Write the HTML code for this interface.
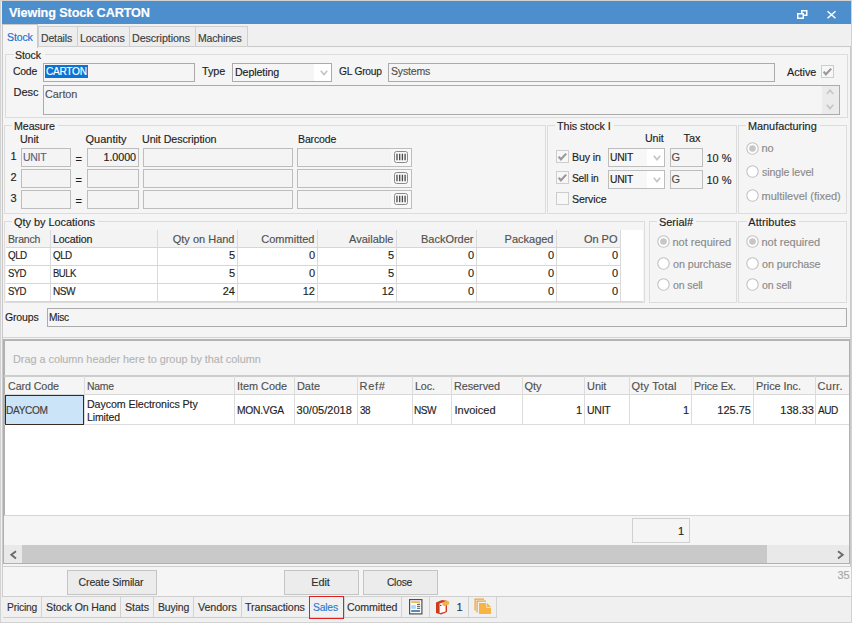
<!DOCTYPE html>
<html><head><meta charset="utf-8"><style>
html,body{margin:0;padding:0;width:852px;height:623px;overflow:hidden;background:#f0f0f0}
.a{position:absolute;box-sizing:border-box}
.t{position:absolute;white-space:nowrap;font-family:"Liberation Sans", sans-serif;-webkit-text-stroke:0.15px currentColor}
</style></head><body>
<div class="a" style="left:0px;top:0px;width:852px;height:623px;background:#d2d2d2;"></div>
<div class="a" style="left:1px;top:1px;width:850px;height:621px;background:#f0f0f0;"></div>
<div class="a" style="left:2px;top:1px;width:849px;height:23px;background:#4d8fcd;"></div>
<div class="t" style="top:6.00px;font-size:13px;line-height:13px;color:#ffffff;font-weight:700;letter-spacing:-0.108px;left:8.5px;transform:scaleX(0.9736);transform-origin:0 0;">Viewing Stock CARTON</div>
<svg class="a" style="left:796px;top:9px" width="13" height="12"><rect x="5.75" y="1.75" width="5" height="4.5" fill="none" stroke="#fff" stroke-width="1.5"/><rect x="1.75" y="4.75" width="5.5" height="4.5" fill="#4d8fcd" stroke="#fff" stroke-width="1.5"/></svg>
<svg class="a" style="left:826px;top:10px" width="11" height="10"><path d="M1.5 1.2 L9.5 8.3 M9.5 1.2 L1.5 8.3" stroke="#fff" stroke-width="1.5"/></svg>
<div class="a" style="left:2px;top:46px;width:849px;height:521px;background:#f5f5f5;border:1px solid #c9c9c9;"></div>
<div class="a" style="left:38px;top:26px;width:40px;height:21px;border:1px solid #cfcfcf;background:#ededed"></div>
<div class="a" style="left:77px;top:26px;width:53px;height:21px;border:1px solid #cfcfcf;background:#ededed"></div>
<div class="a" style="left:129px;top:26px;width:67px;height:21px;border:1px solid #cfcfcf;background:#ededed"></div>
<div class="a" style="left:195px;top:26px;width:53px;height:21px;border:1px solid #cfcfcf;background:#ededed"></div>
<div class="t" style="top:31.69px;font-size:11px;line-height:13px;color:#3c3c3c;letter-spacing:-0.141px;left:40.5px;transform:scaleX(0.952);transform-origin:0 0;">Details</div>
<div class="t" style="top:31.69px;font-size:11px;line-height:13px;color:#3c3c3c;letter-spacing:-0.105px;left:79.5px;transform:scaleX(0.9665);transform-origin:0 0;">Locations</div>
<div class="t" style="top:31.69px;font-size:11px;line-height:13px;color:#3c3c3c;letter-spacing:-0.077px;left:131.5px;transform:scaleX(0.9736);transform-origin:0 0;">Descriptions</div>
<div class="t" style="top:31.69px;font-size:11px;line-height:13px;color:#3c3c3c;letter-spacing:-0.169px;left:197.5px;transform:scaleX(0.9521);transform-origin:0 0;">Machines</div>
<div class="a" style="left:2px;top:24px;width:36px;height:24px;border:1px solid #c9c9c9;border-bottom:none;background:#f5f5f5"></div>
<div class="t" style="top:30.69px;font-size:11px;line-height:13px;color:#1a6fcc;letter-spacing:-0.151px;left:6.5px;transform:scaleX(0.9582);transform-origin:0 0;">Stock</div>
<div class="a" style="left:5px;top:54px;width:843px;height:64px;border:1px solid #dcdcdc;"></div>
<div class="a" style="left:13.5px;top:52px;width:31.0px;height:5px;background:#f5f5f5;"></div>
<div class="t" style="top:48.69px;font-size:11px;line-height:13px;color:#1e1e1e;letter-spacing:-0.134px;left:15.0px;transform:scaleX(0.9632);transform-origin:0 0;">Stock</div>
<div class="t" style="top:64.69px;font-size:11px;line-height:13px;color:#1e1e1e;letter-spacing:-0.245px;left:12.5px;transform:scaleX(0.9466);transform-origin:0 0;">Code</div>
<div class="a" style="left:43px;top:63px;width:152px;height:19px;box-sizing:border-box;border:1px solid #ababab;background:#f5f5f5"></div>
<div class="a" style="left:45px;top:65px;width:43px;height:13px;background:#0a74d6;"></div>
<div class="t" style="top:64.69px;font-size:11px;line-height:13px;color:#ffffff;letter-spacing:-0.354px;left:45.5px;transform:scaleX(0.9259);transform-origin:0 0;">CARTON</div>
<div class="t" style="top:64.69px;font-size:11px;line-height:13px;color:#1e1e1e;letter-spacing:-0.076px;left:201.5px;transform:scaleX(0.9821);transform-origin:0 0;">Type</div>
<div class="a" style="left:232px;top:63px;width:100px;height:19px;box-sizing:border-box;border:1px solid #ababab;background:#f5f5f5"></div>
<div class="a" style="left:314px;top:64px;width:17px;height:17px;background:#ffffff;"></div>
<svg class="a" style="left:318.5px;top:70px" width="10" height="7"><path d="M1.8 0.8 L5 4.6 L8.2 0.8" fill="none" stroke="#c6c6c6" stroke-width="1.7"/></svg>
<div class="t" style="top:66.19px;font-size:11px;line-height:13px;color:#202020;letter-spacing:-0.1px;left:234.5px;transform:scaleX(0.9676);transform-origin:0 0;">Depleting</div>
<div class="t" style="top:64.69px;font-size:11px;line-height:13px;color:#1e1e1e;letter-spacing:-0.244px;left:338.5px;transform:scaleX(0.9311);transform-origin:0 0;">GL Group</div>
<div class="a" style="left:388px;top:63px;width:387px;height:19px;box-sizing:border-box;border:1px solid #ababab;background:#f5f5f5"></div>
<div class="t" style="top:64.69px;font-size:11px;line-height:13px;color:#505050;letter-spacing:-0.167px;left:390.5px;transform:scaleX(0.9546);transform-origin:0 0;">Systems</div>
<div class="t" style="top:65.69px;font-size:11px;line-height:13px;color:#1e1e1e;letter-spacing:-0.045px;left:786.5px;transform:scaleX(0.9857);transform-origin:0 0;">Active</div>
<div class="a" style="left:821px;top:65px;width:13px;height:13px;box-sizing:border-box;border:1px solid #cdcdcd;background:#f7f7f7"></div>
<svg class="a" style="left:821px;top:65px" width="13" height="13"><path d="M2.6 6.6 L4.9 9.3 L10.2 3.6" fill="none" stroke="#999999" stroke-width="2.1"/></svg>
<div class="t" style="top:85.69px;font-size:11px;line-height:13px;color:#1e1e1e;left:13.5px;">Desc</div>
<div class="a" style="left:43px;top:85px;width:797px;height:30px;box-sizing:border-box;border:1px solid #ababab;background:#f5f5f5"></div>
<div class="a" style="left:822px;top:86px;width:17px;height:28px;background:#ebebeb;"></div>
<svg class="a" style="left:825px;top:89px" width="10" height="7"><path d="M1.8 5 L5 1.2 L8.2 5" fill="none" stroke="#c6c6c6" stroke-width="1.7"/></svg>
<svg class="a" style="left:825px;top:104px" width="10" height="7"><path d="M1.8 0.8 L5 4.6 L8.2 0.8" fill="none" stroke="#c6c6c6" stroke-width="1.7"/></svg>
<div class="t" style="top:87.69px;font-size:11px;line-height:13px;color:#505050;letter-spacing:-0.043px;left:44.5px;transform:scaleX(0.9877);transform-origin:0 0;">Carton</div>
<div class="a" style="left:4px;top:125px;width:542px;height:89px;border:1px solid #dcdcdc;"></div>
<div class="a" style="left:12px;top:123px;width:46px;height:5px;background:#f5f5f5;"></div>
<div class="t" style="top:119.69px;font-size:11px;line-height:13px;color:#1e1e1e;letter-spacing:-0.105px;left:13.5px;transform:scaleX(0.9723);transform-origin:0 0;">Measure</div>
<div class="t" style="top:132.69px;font-size:11px;line-height:13px;color:#1e1e1e;letter-spacing:-0.1px;left:19.5px;transform:scaleX(0.9709);transform-origin:0 0;">Unit</div>
<div class="t" style="top:132.69px;font-size:11px;line-height:13px;color:#1e1e1e;letter-spacing:0.019px;left:85.5px;">Quantity</div>
<div class="t" style="top:132.69px;font-size:11px;line-height:13px;color:#1e1e1e;letter-spacing:-0.073px;left:141.5px;transform:scaleX(0.9733);transform-origin:0 0;">Unit Description</div>
<div class="t" style="top:132.69px;font-size:11px;line-height:13px;color:#1e1e1e;letter-spacing:-0.15px;left:297.5px;transform:scaleX(0.9583);transform-origin:0 0;">Barcode</div>
<div class="t" style="top:149.69px;font-size:11px;line-height:13px;color:#1e1e1e;left:10.5px;">1</div>
<div class="a" style="left:21px;top:148px;width:50px;height:19px;box-sizing:border-box;border:1px solid #bdbdbd;background:#f4f4f4"></div>
<div class="t" style="top:153.19px;font-size:11px;line-height:13px;color:#1e1e1e;left:75.5px;">=</div>
<div class="a" style="left:87px;top:148px;width:52px;height:19px;box-sizing:border-box;border:1px solid #bdbdbd;background:#f4f4f4"></div>
<div class="a" style="left:143px;top:148px;width:150px;height:19px;box-sizing:border-box;border:1px solid #bdbdbd;background:#f4f4f4"></div>
<div class="a" style="left:297px;top:148px;width:115px;height:19px;box-sizing:border-box;border:1px solid #bdbdbd;background:#f4f4f4"></div>
<div class="a" style="left:391px;top:149px;width:20px;height:17px;background:#f8f8f8;"></div>
<svg class="a" style="left:394px;top:151px" width="14" height="12"><rect x="0.5" y="0.5" width="13" height="11" rx="2" fill="#f8f8f8" stroke="#8a8a8a"/><path d="M3 2.8 V9.2 M5.7 2.8 V9.2 M8.4 2.8 V9.2 M11.1 2.8 V9.2" stroke="#4a4a4a" stroke-width="1.3"/></svg>
<div class="t" style="top:170.69px;font-size:11px;line-height:13px;color:#1e1e1e;left:10.5px;">2</div>
<div class="a" style="left:21px;top:169px;width:50px;height:19px;box-sizing:border-box;border:1px solid #bdbdbd;background:#f4f4f4"></div>
<div class="t" style="top:174.19px;font-size:11px;line-height:13px;color:#1e1e1e;left:75.5px;">=</div>
<div class="a" style="left:87px;top:169px;width:52px;height:19px;box-sizing:border-box;border:1px solid #bdbdbd;background:#f4f4f4"></div>
<div class="a" style="left:143px;top:169px;width:150px;height:19px;box-sizing:border-box;border:1px solid #bdbdbd;background:#f4f4f4"></div>
<div class="a" style="left:297px;top:169px;width:115px;height:19px;box-sizing:border-box;border:1px solid #bdbdbd;background:#f4f4f4"></div>
<div class="a" style="left:391px;top:170px;width:20px;height:17px;background:#f8f8f8;"></div>
<svg class="a" style="left:394px;top:172px" width="14" height="12"><rect x="0.5" y="0.5" width="13" height="11" rx="2" fill="#f8f8f8" stroke="#8a8a8a"/><path d="M3 2.8 V9.2 M5.7 2.8 V9.2 M8.4 2.8 V9.2 M11.1 2.8 V9.2" stroke="#4a4a4a" stroke-width="1.3"/></svg>
<div class="t" style="top:191.69px;font-size:11px;line-height:13px;color:#1e1e1e;left:10.5px;">3</div>
<div class="a" style="left:21px;top:190px;width:50px;height:19px;box-sizing:border-box;border:1px solid #bdbdbd;background:#f4f4f4"></div>
<div class="t" style="top:195.19px;font-size:11px;line-height:13px;color:#1e1e1e;left:75.5px;">=</div>
<div class="a" style="left:87px;top:190px;width:52px;height:19px;box-sizing:border-box;border:1px solid #bdbdbd;background:#f4f4f4"></div>
<div class="a" style="left:143px;top:190px;width:150px;height:19px;box-sizing:border-box;border:1px solid #bdbdbd;background:#f4f4f4"></div>
<div class="a" style="left:297px;top:190px;width:115px;height:19px;box-sizing:border-box;border:1px solid #bdbdbd;background:#f4f4f4"></div>
<div class="a" style="left:391px;top:191px;width:20px;height:17px;background:#f8f8f8;"></div>
<svg class="a" style="left:394px;top:193px" width="14" height="12"><rect x="0.5" y="0.5" width="13" height="11" rx="2" fill="#f8f8f8" stroke="#8a8a8a"/><path d="M3 2.8 V9.2 M5.7 2.8 V9.2 M8.4 2.8 V9.2 M11.1 2.8 V9.2" stroke="#4a4a4a" stroke-width="1.3"/></svg>
<div class="t" style="top:150.69px;font-size:11px;line-height:13px;color:#60607a;letter-spacing:-0.24px;left:22.5px;transform:scaleX(0.9463);transform-origin:0 0;">UNIT</div>
<div class="t" style="top:150.99px;font-size:11px;line-height:13px;color:#202020;letter-spacing:-0.073px;left:76px;width:60px;text-align:right;transform:scaleX(0.9797);transform-origin:100% 0;">1.0000</div>
<div class="a" style="left:547px;top:125px;width:190px;height:89px;border:1px solid #dcdcdc;"></div>
<div class="a" style="left:555px;top:123px;width:58.700000000000045px;height:5px;background:#f5f5f5;"></div>
<div class="t" style="top:119.69px;font-size:11px;line-height:13px;color:#1e1e1e;letter-spacing:-0.061px;left:556.5px;transform:scaleX(0.9773);transform-origin:0 0;">This stock I</div>
<div class="t" style="top:131.69px;font-size:11px;line-height:13px;color:#1e1e1e;letter-spacing:-0.1px;left:644.5px;transform:scaleX(0.9709);transform-origin:0 0;">Unit</div>
<div class="t" style="top:131.69px;font-size:11px;line-height:13px;color:#1e1e1e;left:683.5px;">Tax</div>
<div class="a" style="left:556px;top:150px;width:13px;height:13px;box-sizing:border-box;border:1px solid #cdcdcd;background:#f7f7f7"></div>
<svg class="a" style="left:556px;top:150px" width="13" height="13"><path d="M2.6 6.6 L4.9 9.3 L10.2 3.6" fill="none" stroke="#999999" stroke-width="2.1"/></svg>
<div class="t" style="top:150.69px;font-size:11px;line-height:13px;color:#1e1e1e;letter-spacing:-0.11px;left:571.5px;transform:scaleX(0.966);transform-origin:0 0;">Buy in</div>
<div class="a" style="left:608px;top:148px;width:57px;height:19px;box-sizing:border-box;border:1px solid #bdbdbd;background:#f7f7f7"></div>
<div class="a" style="left:647px;top:149px;width:17px;height:17px;background:#ffffff;"></div>
<svg class="a" style="left:651.5px;top:155px" width="10" height="7"><path d="M1.8 0.8 L5 4.6 L8.2 0.8" fill="none" stroke="#c6c6c6" stroke-width="1.7"/></svg>
<div class="t" style="top:150.69px;font-size:11px;line-height:13px;color:#202020;letter-spacing:-0.287px;left:609.5px;transform:scaleX(0.9355);transform-origin:0 0;">UNIT</div>
<div class="a" style="left:670px;top:148px;width:33px;height:19px;box-sizing:border-box;border:1px solid #bdbdbd;background:#f5f5f5"></div>
<div class="t" style="top:150.69px;font-size:11px;line-height:13px;color:#505050;left:671.5px;">G</div>
<div class="t" style="top:151.69px;font-size:11px;line-height:13px;color:#1e1e1e;letter-spacing:-0.008px;left:706.5px;">10 %</div>
<div class="a" style="left:556px;top:171px;width:13px;height:13px;box-sizing:border-box;border:1px solid #cdcdcd;background:#f7f7f7"></div>
<svg class="a" style="left:556px;top:171px" width="13" height="13"><path d="M2.6 6.6 L4.9 9.3 L10.2 3.6" fill="none" stroke="#999999" stroke-width="2.1"/></svg>
<div class="t" style="top:171.69px;font-size:11px;line-height:13px;color:#1e1e1e;letter-spacing:-0.19px;left:571.5px;transform:scaleX(0.9264);transform-origin:0 0;">Sell in</div>
<div class="a" style="left:608px;top:170px;width:57px;height:19px;box-sizing:border-box;border:1px solid #bdbdbd;background:#f7f7f7"></div>
<div class="a" style="left:647px;top:171px;width:17px;height:17px;background:#ffffff;"></div>
<svg class="a" style="left:651.5px;top:177px" width="10" height="7"><path d="M1.8 0.8 L5 4.6 L8.2 0.8" fill="none" stroke="#c6c6c6" stroke-width="1.7"/></svg>
<div class="t" style="top:172.69px;font-size:11px;line-height:13px;color:#202020;letter-spacing:-0.287px;left:609.5px;transform:scaleX(0.9355);transform-origin:0 0;">UNIT</div>
<div class="a" style="left:670px;top:170px;width:33px;height:19px;box-sizing:border-box;border:1px solid #bdbdbd;background:#f5f5f5"></div>
<div class="t" style="top:172.69px;font-size:11px;line-height:13px;color:#505050;left:671.5px;">G</div>
<div class="t" style="top:173.69px;font-size:11px;line-height:13px;color:#1e1e1e;letter-spacing:-0.008px;left:706.5px;">10 %</div>
<div class="a" style="left:556px;top:192px;width:13px;height:13px;box-sizing:border-box;border:1px solid #cdcdcd;background:#f7f7f7"></div>
<div class="t" style="top:192.69px;font-size:11px;line-height:13px;color:#1e1e1e;letter-spacing:-0.121px;left:571.5px;transform:scaleX(0.9623);transform-origin:0 0;">Service</div>
<div class="a" style="left:738px;top:125px;width:109px;height:89px;border:1px solid #dcdcdc;"></div>
<div class="a" style="left:746px;top:123px;width:73.70000000000005px;height:5px;background:#f5f5f5;"></div>
<div class="t" style="top:119.69px;font-size:11px;line-height:13px;color:#1e1e1e;letter-spacing:-0.029px;left:747.5px;transform:scaleX(0.9905);transform-origin:0 0;">Manufacturing</div>
<svg class="a" style="left:746px;top:142px" width="13" height="13"><circle cx="6.5" cy="6.5" r="5.7" fill="#ffffff" stroke="#c2c2c2" stroke-width="1.1"/><circle cx="6.5" cy="6.5" r="3.3" fill="#c6c6c6"/></svg>
<div class="t" style="top:141.69px;font-size:11px;line-height:13px;color:#8a8a8a;left:761.5px;">no</div>
<svg class="a" style="left:746px;top:165px" width="13" height="13"><circle cx="6.5" cy="6.5" r="5.7" fill="#ffffff" stroke="#c2c2c2" stroke-width="1.1"/></svg>
<div class="t" style="top:165.69px;font-size:11px;line-height:13px;color:#8a8a8a;letter-spacing:-0.09px;left:761.5px;transform:scaleX(0.9657);transform-origin:0 0;">single level</div>
<svg class="a" style="left:746px;top:189px" width="13" height="13"><circle cx="6.5" cy="6.5" r="5.7" fill="#ffffff" stroke="#c2c2c2" stroke-width="1.1"/></svg>
<div class="t" style="top:189.69px;font-size:11px;line-height:13px;color:#8a8a8a;letter-spacing:-0.012px;left:761.5px;">multilevel (fixed)</div>
<div class="a" style="left:4px;top:221px;width:641px;height:82px;border:1px solid #dcdcdc;"></div>
<div class="a" style="left:12.4px;top:219px;width:86.0px;height:5px;background:#f5f5f5;"></div>
<div class="t" style="top:215.69px;font-size:11px;line-height:13px;color:#1e1e1e;letter-spacing:-0.022px;left:13.9px;transform:scaleX(0.9926);transform-origin:0 0;">Qty by Locations</div>
<div class="a" style="left:6px;top:230px;width:637px;height:72px;background:#ffffff;"></div>
<div class="a" style="left:6px;top:230px;width:614px;height:17px;background:#f3f3f3;"></div>
<div class="a" style="left:50px;top:230px;width:1px;height:71px;background:#dadada;"></div>
<div class="a" style="left:157px;top:230px;width:1px;height:71px;background:#dadada;"></div>
<div class="a" style="left:237px;top:230px;width:1px;height:71px;background:#dadada;"></div>
<div class="a" style="left:317px;top:230px;width:1px;height:71px;background:#dadada;"></div>
<div class="a" style="left:396px;top:230px;width:1px;height:71px;background:#dadada;"></div>
<div class="a" style="left:476px;top:230px;width:1px;height:71px;background:#dadada;"></div>
<div class="a" style="left:556px;top:230px;width:1px;height:71px;background:#dadada;"></div>
<div class="a" style="left:620px;top:230px;width:1px;height:71px;background:#dadada;"></div>
<div class="a" style="left:6px;top:247px;width:614px;height:1px;background:#d6d6d6;"></div>
<div class="a" style="left:6px;top:265px;width:614px;height:1px;background:#d6d6d6;"></div>
<div class="a" style="left:6px;top:283px;width:614px;height:1px;background:#d6d6d6;"></div>
<div class="a" style="left:6px;top:301px;width:637px;height:1px;background:#d6d6d6;"></div>
<div class="t" style="top:232.69px;font-size:11px;line-height:13px;color:#505050;letter-spacing:-0.171px;left:7.5px;transform:scaleX(0.9531);transform-origin:0 0;">Branch</div>
<div class="t" style="top:232.69px;font-size:11px;line-height:13px;color:#1e1e1e;letter-spacing:-0.109px;left:52.5px;transform:scaleX(0.965);transform-origin:0 0;">Location</div>
<div class="t" style="top:232.69px;font-size:11px;line-height:13px;color:#505050;left:154.5px;width:80px;text-align:right;">Qty on Hand</div>
<div class="t" style="top:232.69px;font-size:11px;line-height:13px;color:#505050;left:234.5px;width:80px;text-align:right;">Committed</div>
<div class="t" style="top:232.69px;font-size:11px;line-height:13px;color:#505050;left:313.5px;width:80px;text-align:right;">Available</div>
<div class="t" style="top:232.69px;font-size:11px;line-height:13px;color:#505050;left:393.5px;width:80px;text-align:right;">BackOrder</div>
<div class="t" style="top:232.69px;font-size:11px;line-height:13px;color:#505050;left:473.5px;width:80px;text-align:right;">Packaged</div>
<div class="t" style="top:232.69px;font-size:11px;line-height:13px;color:#505050;left:537.5px;width:80px;text-align:right;">On PO</div>
<div class="t" style="top:248.69px;font-size:11px;line-height:13px;color:#1e1e1e;letter-spacing:-0.598px;left:7.5px;transform:scaleX(0.8962);transform-origin:0 0;">QLD</div>
<div class="t" style="top:248.69px;font-size:11px;line-height:13px;color:#1e1e1e;letter-spacing:-0.598px;left:52.5px;transform:scaleX(0.8962);transform-origin:0 0;">QLD</div>
<div class="t" style="top:248.69px;font-size:11px;line-height:13px;color:#1e1e1e;left:175px;width:60px;text-align:right;">5</div>
<div class="t" style="top:248.69px;font-size:11px;line-height:13px;color:#1e1e1e;left:255px;width:60px;text-align:right;">0</div>
<div class="t" style="top:248.69px;font-size:11px;line-height:13px;color:#1e1e1e;left:334px;width:60px;text-align:right;">5</div>
<div class="t" style="top:248.69px;font-size:11px;line-height:13px;color:#1e1e1e;left:414px;width:60px;text-align:right;">0</div>
<div class="t" style="top:248.69px;font-size:11px;line-height:13px;color:#1e1e1e;left:494px;width:60px;text-align:right;">0</div>
<div class="t" style="top:248.69px;font-size:11px;line-height:13px;color:#1e1e1e;left:558px;width:60px;text-align:right;">0</div>
<div class="t" style="top:266.69px;font-size:11px;line-height:13px;color:#1e1e1e;letter-spacing:-0.756px;left:7.5px;transform:scaleX(0.867);transform-origin:0 0;">SYD</div>
<div class="t" style="top:266.69px;font-size:11px;line-height:13px;color:#1e1e1e;letter-spacing:-0.635px;left:52.5px;transform:scaleX(0.8683);transform-origin:0 0;">BULK</div>
<div class="t" style="top:266.69px;font-size:11px;line-height:13px;color:#1e1e1e;left:175px;width:60px;text-align:right;">5</div>
<div class="t" style="top:266.69px;font-size:11px;line-height:13px;color:#1e1e1e;left:255px;width:60px;text-align:right;">0</div>
<div class="t" style="top:266.69px;font-size:11px;line-height:13px;color:#1e1e1e;left:334px;width:60px;text-align:right;">5</div>
<div class="t" style="top:266.69px;font-size:11px;line-height:13px;color:#1e1e1e;left:414px;width:60px;text-align:right;">0</div>
<div class="t" style="top:266.69px;font-size:11px;line-height:13px;color:#1e1e1e;left:494px;width:60px;text-align:right;">0</div>
<div class="t" style="top:266.69px;font-size:11px;line-height:13px;color:#1e1e1e;left:558px;width:60px;text-align:right;">0</div>
<div class="t" style="top:284.69px;font-size:11px;line-height:13px;color:#1e1e1e;letter-spacing:-0.756px;left:7.5px;transform:scaleX(0.867);transform-origin:0 0;">SYD</div>
<div class="t" style="top:284.69px;font-size:11px;line-height:13px;color:#1e1e1e;letter-spacing:-0.553px;left:52.5px;transform:scaleX(0.9163);transform-origin:0 0;">NSW</div>
<div class="t" style="top:284.69px;font-size:11px;line-height:13px;color:#1e1e1e;left:175px;width:60px;text-align:right;">24</div>
<div class="t" style="top:284.69px;font-size:11px;line-height:13px;color:#1e1e1e;left:255px;width:60px;text-align:right;">12</div>
<div class="t" style="top:284.69px;font-size:11px;line-height:13px;color:#1e1e1e;left:334px;width:60px;text-align:right;">12</div>
<div class="t" style="top:284.69px;font-size:11px;line-height:13px;color:#1e1e1e;left:414px;width:60px;text-align:right;">0</div>
<div class="t" style="top:284.69px;font-size:11px;line-height:13px;color:#1e1e1e;left:494px;width:60px;text-align:right;">0</div>
<div class="t" style="top:284.69px;font-size:11px;line-height:13px;color:#1e1e1e;left:558px;width:60px;text-align:right;">0</div>
<div class="a" style="left:649px;top:221px;width:88px;height:82px;border:1px solid #dcdcdc;"></div>
<div class="a" style="left:657.4px;top:219px;width:39.0px;height:5px;background:#f5f5f5;"></div>
<div class="t" style="top:215.69px;font-size:11px;line-height:13px;color:#1e1e1e;letter-spacing:-0.014px;left:658.9px;">Serial#</div>
<div class="a" style="left:738px;top:221px;width:109px;height:82px;border:1px solid #dcdcdc;"></div>
<div class="a" style="left:746.7px;top:219px;width:52.60000000000002px;height:5px;background:#f5f5f5;"></div>
<div class="t" style="top:215.69px;font-size:11px;line-height:13px;color:#1e1e1e;letter-spacing:0.126px;left:748.2px;">Attributes</div>
<svg class="a" style="left:657px;top:235px" width="13" height="13"><circle cx="6.5" cy="6.5" r="5.7" fill="#ffffff" stroke="#c2c2c2" stroke-width="1.1"/><circle cx="6.5" cy="6.5" r="3.3" fill="#c6c6c6"/></svg>
<div class="t" style="top:235.69px;font-size:11px;line-height:13px;color:#8a8a8a;letter-spacing:-0.007px;left:672.5px;">not required</div>
<svg class="a" style="left:657px;top:257px" width="13" height="13"><circle cx="6.5" cy="6.5" r="5.7" fill="#ffffff" stroke="#c2c2c2" stroke-width="1.1"/></svg>
<div class="t" style="top:257.69px;font-size:11px;line-height:13px;color:#8a8a8a;letter-spacing:-0.071px;left:672.5px;transform:scaleX(0.9778);transform-origin:0 0;">on purchase</div>
<svg class="a" style="left:657px;top:278px" width="13" height="13"><circle cx="6.5" cy="6.5" r="5.7" fill="#ffffff" stroke="#c2c2c2" stroke-width="1.1"/></svg>
<div class="t" style="top:278.69px;font-size:11px;line-height:13px;color:#8a8a8a;letter-spacing:-0.123px;left:672.5px;transform:scaleX(0.9562);transform-origin:0 0;">on sell</div>
<svg class="a" style="left:746px;top:235px" width="13" height="13"><circle cx="6.5" cy="6.5" r="5.7" fill="#ffffff" stroke="#c2c2c2" stroke-width="1.1"/><circle cx="6.5" cy="6.5" r="3.3" fill="#c6c6c6"/></svg>
<div class="t" style="top:235.69px;font-size:11px;line-height:13px;color:#8a8a8a;letter-spacing:-0.007px;left:761.5px;">not required</div>
<svg class="a" style="left:746px;top:257px" width="13" height="13"><circle cx="6.5" cy="6.5" r="5.7" fill="#ffffff" stroke="#c2c2c2" stroke-width="1.1"/></svg>
<div class="t" style="top:257.69px;font-size:11px;line-height:13px;color:#8a8a8a;letter-spacing:-0.071px;left:761.5px;transform:scaleX(0.9778);transform-origin:0 0;">on purchase</div>
<svg class="a" style="left:746px;top:278px" width="13" height="13"><circle cx="6.5" cy="6.5" r="5.7" fill="#ffffff" stroke="#c2c2c2" stroke-width="1.1"/></svg>
<div class="t" style="top:278.69px;font-size:11px;line-height:13px;color:#8a8a8a;letter-spacing:-0.123px;left:761.5px;transform:scaleX(0.9562);transform-origin:0 0;">on sell</div>
<div class="t" style="top:310.69px;font-size:11px;line-height:13px;color:#1e1e1e;letter-spacing:-0.166px;left:4.5px;transform:scaleX(0.9563);transform-origin:0 0;">Groups</div>
<div class="a" style="left:47px;top:308px;width:800px;height:19px;box-sizing:border-box;border:1px solid #ababab;background:#f5f5f5"></div>
<div class="t" style="top:310.69px;font-size:11px;line-height:13px;color:#1e1e1e;letter-spacing:-0.305px;left:48.5px;transform:scaleX(0.9219);transform-origin:0 0;">Misc</div>
<div class="a" style="left:3px;top:337px;width:847px;height:1px;background:#d4d4d4;"></div>
<div class="a" style="left:3px;top:339px;width:847px;height:225px;border:1px solid #b0b0b0;border-top:2px solid #b4b4b4;border-left:2px solid #b0b0b0;background:#ffffff"></div>
<div class="a" style="left:4.5px;top:341px;width:844.5px;height:34px;background:#f4f4f4;"></div>
<div class="t" style="top:352.69px;font-size:11px;line-height:13px;color:#b4b4b4;letter-spacing:-0.03px;left:12.5px;transform:scaleX(0.9893);transform-origin:0 0;">Drag a column header here to group by that column</div>
<div class="a" style="left:4px;top:375px;width:845px;height:2px;background:#cdcdcd;"></div>
<div class="a" style="left:4.5px;top:377px;width:844.5px;height:17px;background:#f5f5f5;"></div>
<div class="a" style="left:4px;top:394px;width:845px;height:1px;background:#d8d8d8;"></div>
<div class="a" style="left:84px;top:376px;width:1px;height:49px;background:#dcdcdc;"></div>
<div class="a" style="left:234px;top:376px;width:1px;height:49px;background:#dcdcdc;"></div>
<div class="a" style="left:294px;top:376px;width:1px;height:49px;background:#dcdcdc;"></div>
<div class="a" style="left:357px;top:376px;width:1px;height:49px;background:#dcdcdc;"></div>
<div class="a" style="left:412px;top:376px;width:1px;height:49px;background:#dcdcdc;"></div>
<div class="a" style="left:451px;top:376px;width:1px;height:49px;background:#dcdcdc;"></div>
<div class="a" style="left:522px;top:376px;width:1px;height:49px;background:#dcdcdc;"></div>
<div class="a" style="left:584px;top:376px;width:1px;height:49px;background:#dcdcdc;"></div>
<div class="a" style="left:629px;top:376px;width:1px;height:49px;background:#dcdcdc;"></div>
<div class="a" style="left:691px;top:376px;width:1px;height:49px;background:#dcdcdc;"></div>
<div class="a" style="left:753px;top:376px;width:1px;height:49px;background:#dcdcdc;"></div>
<div class="a" style="left:815px;top:376px;width:1px;height:49px;background:#dcdcdc;"></div>
<div class="a" style="left:4px;top:424px;width:845px;height:1px;background:#dcdcdc;"></div>
<div class="t" style="top:379.69px;font-size:11px;line-height:13px;color:#505050;letter-spacing:-0.096px;left:7.5px;transform:scaleX(0.9727);transform-origin:0 0;">Card Code</div>
<div class="t" style="top:379.69px;font-size:11px;line-height:13px;color:#505050;letter-spacing:-0.273px;left:86.5px;transform:scaleX(0.9467);transform-origin:0 0;">Name</div>
<div class="t" style="top:379.69px;font-size:11px;line-height:13px;color:#505050;letter-spacing:-0.033px;left:236.5px;transform:scaleX(0.9904);transform-origin:0 0;">Item Code</div>
<div class="t" style="top:379.69px;font-size:11px;line-height:13px;color:#505050;letter-spacing:-0.028px;left:296.5px;transform:scaleX(0.9933);transform-origin:0 0;">Date</div>
<div class="t" style="top:379.69px;font-size:11px;line-height:13px;color:#505050;letter-spacing:0.72px;left:359.5px;">Ref#</div>
<div class="t" style="top:379.69px;font-size:11px;line-height:13px;color:#505050;letter-spacing:-0.092px;left:414.5px;transform:scaleX(0.9749);transform-origin:0 0;">Loc.</div>
<div class="t" style="top:379.69px;font-size:11px;line-height:13px;color:#505050;letter-spacing:-0.054px;left:453.5px;transform:scaleX(0.985);transform-origin:0 0;">Reserved</div>
<div class="t" style="top:379.69px;font-size:11px;line-height:13px;color:#505050;letter-spacing:-0.019px;left:524.5px;">Qty</div>
<div class="t" style="top:379.69px;font-size:11px;line-height:13px;color:#505050;letter-spacing:-0.019px;left:586.5px;transform:scaleX(0.9947);transform-origin:0 0;">Unit</div>
<div class="t" style="top:379.69px;font-size:11px;line-height:13px;color:#505050;letter-spacing:0.225px;left:631.5px;">Qty Total</div>
<div class="t" style="top:379.69px;font-size:11px;line-height:13px;color:#505050;letter-spacing:-0.088px;left:693.5px;transform:scaleX(0.9698);transform-origin:0 0;">Price Ex.</div>
<div class="t" style="top:379.69px;font-size:11px;line-height:13px;color:#505050;letter-spacing:-0.033px;left:755.5px;transform:scaleX(0.9879);transform-origin:0 0;">Price Inc.</div>
<div class="t" style="top:379.69px;font-size:11px;line-height:13px;color:#505050;letter-spacing:0.29px;left:817.5px;">Curr.</div>
<div class="a" style="left:5px;top:395px;width:79px;height:30px;border:1.5px solid #3a2a20;background:#cce4f7"></div>
<div class="t" style="top:403.69px;font-size:11px;line-height:13px;color:#404040;letter-spacing:-0.382px;left:5.8px;transform:scaleX(0.9221);transform-origin:0 0;">DAYCOM</div>
<div class="t" style="top:397.69px;font-size:11px;line-height:13px;color:#1e1e1e;letter-spacing:-0.089px;left:86.5px;transform:scaleX(0.9696);transform-origin:0 0;">Daycom Electronics Pty</div>
<div class="t" style="top:410.69px;font-size:11px;line-height:13px;color:#1e1e1e;letter-spacing:-0.144px;left:86.5px;transform:scaleX(0.9539);transform-origin:0 0;">Limited</div>
<div class="t" style="top:403.69px;font-size:11px;line-height:13px;color:#1e1e1e;letter-spacing:-0.289px;left:236.5px;transform:scaleX(0.936);transform-origin:0 0;">MON.VGA</div>
<div class="t" style="top:403.69px;font-size:11px;line-height:13px;color:#1e1e1e;letter-spacing:0.028px;left:296.5px;">30/05/2018</div>
<div class="t" style="top:403.69px;font-size:11px;line-height:13px;color:#1e1e1e;letter-spacing:-0.609px;left:359.5px;transform:scaleX(0.9028);transform-origin:0 0;">38</div>
<div class="t" style="top:403.69px;font-size:11px;line-height:13px;color:#1e1e1e;letter-spacing:-0.553px;left:413.5px;transform:scaleX(0.9163);transform-origin:0 0;">NSW</div>
<div class="t" style="top:403.69px;font-size:11px;line-height:13px;color:#1e1e1e;letter-spacing:0.004px;left:454.5px;">Invoiced</div>
<div class="t" style="top:403.69px;font-size:11px;line-height:13px;color:#1e1e1e;left:542px;width:40px;text-align:right;">1</div>
<div class="t" style="top:403.69px;font-size:11px;line-height:13px;color:#1e1e1e;letter-spacing:-0.229px;left:586.5px;transform:scaleX(0.949);transform-origin:0 0;">UNIT</div>
<div class="t" style="top:403.69px;font-size:11px;line-height:13px;color:#1e1e1e;left:649px;width:40px;text-align:right;">1</div>
<div class="t" style="top:403.69px;font-size:11px;line-height:13px;color:#1e1e1e;left:691px;width:60px;text-align:right;">125.75</div>
<div class="t" style="top:403.69px;font-size:11px;line-height:13px;color:#1e1e1e;left:754px;width:60px;text-align:right;">138.33</div>
<div class="t" style="top:403.69px;font-size:11px;line-height:13px;color:#1e1e1e;letter-spacing:-0.511px;left:817.5px;transform:scaleX(0.9145);transform-origin:0 0;">AUD</div>
<div class="a" style="left:4px;top:515px;width:845px;height:1px;background:#d4d4d4;"></div>
<div class="a" style="left:4px;top:516px;width:845px;height:29px;background:#f5f5f5;"></div>
<div class="a" style="left:632px;top:518px;width:58px;height:25px;box-sizing:border-box;border:1px solid #d0d0d0;background:#f5f5f5"></div>
<div class="t" style="top:524.69px;font-size:11px;line-height:13px;color:#1e1e1e;left:654px;width:30px;text-align:right;">1</div>
<div class="a" style="left:4px;top:545px;width:845px;height:18px;background:#e9e9e9;"></div>
<div class="a" style="left:22px;top:545px;width:745px;height:18px;background:#c9c9c9;"></div>
<svg class="a" style="left:9px;top:550px" width="9" height="10"><path d="M7 1.2 L2.3 4.8 L7 8.4" fill="none" stroke="#6a6a6a" stroke-width="1.9"/></svg>
<svg class="a" style="left:836px;top:550px" width="9" height="10"><path d="M2 1.2 L6.7 4.8 L2 8.4" fill="none" stroke="#6a6a6a" stroke-width="1.9"/></svg>
<div class="a" style="left:2px;top:566px;width:849px;height:31px;border:1px solid #cfcfcf;border-right:none;background:#f5f5f5"></div>
<div class="a" style="left:67px;top:570px;width:90px;height:25px;border:1px solid #c4c4c4;background:#ececec"></div>
<div class="t" style="top:575.69px;font-size:11px;line-height:13px;color:#303030;letter-spacing:-0.126px;left:65.7px;width:90px;text-align:center;transform:scaleX(0.9553);transform-origin:50% 0;">Create Similar</div>
<div class="a" style="left:284px;top:570px;width:75px;height:25px;border:1px solid #c4c4c4;background:#ececec"></div>
<div class="t" style="top:575.69px;font-size:11px;line-height:13px;color:#303030;letter-spacing:-0.041px;left:282.7px;width:75px;text-align:center;transform:scaleX(0.9879);transform-origin:50% 0;">Edit</div>
<div class="a" style="left:363px;top:570px;width:75px;height:25px;border:1px solid #c4c4c4;background:#ececec"></div>
<div class="t" style="top:575.69px;font-size:11px;line-height:13px;color:#303030;letter-spacing:-0.238px;left:361.7px;width:75px;text-align:center;transform:scaleX(0.9349);transform-origin:50% 0;">Close</div>
<div class="t" style="top:568.69px;font-size:11px;line-height:13px;color:#a8a8a8;left:837.5px;">35</div>
<div class="a" style="left:3px;top:617px;width:494px;height:1px;background:#cdcdcd;"></div>
<div class="a" style="left:41px;top:597px;width:1px;height:20px;background:#d2d2d2;"></div>
<div class="a" style="left:120px;top:597px;width:1px;height:20px;background:#d2d2d2;"></div>
<div class="a" style="left:153px;top:597px;width:1px;height:20px;background:#d2d2d2;"></div>
<div class="a" style="left:193px;top:597px;width:1px;height:20px;background:#d2d2d2;"></div>
<div class="a" style="left:241px;top:597px;width:1px;height:20px;background:#d2d2d2;"></div>
<div class="a" style="left:309px;top:597px;width:1px;height:20px;background:#d2d2d2;"></div>
<div class="a" style="left:344px;top:597px;width:1px;height:20px;background:#d2d2d2;"></div>
<div class="a" style="left:401px;top:597px;width:1px;height:20px;background:#d2d2d2;"></div>
<div class="a" style="left:429px;top:597px;width:1px;height:20px;background:#d2d2d2;"></div>
<div class="a" style="left:468px;top:597px;width:1px;height:20px;background:#d2d2d2;"></div>
<div class="a" style="left:496px;top:597px;width:1px;height:20px;background:#d2d2d2;"></div>
<div class="t" style="top:600.69px;font-size:11px;line-height:13px;color:#303030;letter-spacing:-0.194px;left:6.5px;transform:scaleX(0.9336);transform-origin:0 0;">Pricing</div>
<div class="t" style="top:600.69px;font-size:11px;line-height:13px;color:#303030;letter-spacing:-0.128px;left:45.5px;transform:scaleX(0.9609);transform-origin:0 0;">Stock On Hand</div>
<div class="t" style="top:600.69px;font-size:11px;line-height:13px;color:#303030;letter-spacing:-0.094px;left:124.5px;transform:scaleX(0.9719);transform-origin:0 0;">Stats</div>
<div class="t" style="top:600.69px;font-size:11px;line-height:13px;color:#303030;letter-spacing:-0.17px;left:157.5px;transform:scaleX(0.9518);transform-origin:0 0;">Buying</div>
<div class="t" style="top:600.69px;font-size:11px;line-height:13px;color:#303030;letter-spacing:-0.091px;left:197.5px;transform:scaleX(0.9745);transform-origin:0 0;">Vendors</div>
<div class="t" style="top:600.69px;font-size:11px;line-height:13px;color:#303030;letter-spacing:-0.085px;left:244.5px;transform:scaleX(0.972);transform-origin:0 0;">Transactions</div>
<div class="t" style="top:600.69px;font-size:11px;line-height:13px;color:#2a7ad2;letter-spacing:-0.212px;left:313.0px;transform:scaleX(0.9411);transform-origin:0 0;">Sales</div>
<div class="t" style="top:600.69px;font-size:11px;line-height:13px;color:#303030;letter-spacing:-0.122px;left:346.5px;transform:scaleX(0.9654);transform-origin:0 0;">Committed</div>
<div class="a" style="left:309px;top:596px;width:35px;height:23px;border:1px solid #e02020"></div>
<svg class="a" style="left:409px;top:599px" width="14" height="16"><rect x="0.6" y="0.6" width="12.3" height="14.3" fill="#fff" stroke="#4e4e4e" stroke-width="1.2"/><rect x="2.2" y="2.3" width="8.8" height="1.5" fill="#f0a838"/><rect x="2.2" y="6.2" width="4.6" height="3.6" fill="#a8d8f5"/><path d="M8 5.3 H11.2 M8 7.3 H11.2 M8 9.3 H11.2" stroke="#505050" stroke-width="1"/><rect x="2.2" y="11.2" width="8.8" height="1.6" fill="#2d6bb5"/></svg>
<svg class="a" style="left:435px;top:599px" width="15" height="16"><path d="M1 3.5 L7 1 L12 1.8 L12 13 L6 15.5 L1 14 Z" fill="#cf3a1e"/><path d="M4.6 4.5 L10.6 2.7 L10.6 12.5 L4.6 14.3 Z" fill="#fff"/><ellipse cx="10.8" cy="4.4" rx="3.6" ry="2.3" fill="#f2b24a" transform="rotate(-20 10.8 4.4)"/><circle cx="5.8" cy="6.4" r="0.7" fill="#333"/></svg>
<div class="t" style="top:600.69px;font-size:11px;line-height:13px;color:#303060;left:456.5px;">1</div>
<svg class="a" style="left:474px;top:598px" width="18" height="17"><path d="M1.1 12.5 V1.1 H10" stroke="#eda238" stroke-width="1.2" fill="none"/><path d="M3.1 14.5 V3.1 H12" stroke="#eda238" stroke-width="1.2" fill="none"/><path d="M5 5 H12.3 V9.7 H17 V16 H5 Z" fill="#f7b444"/><path d="M13 5 L17 9 H13 Z" fill="#f7b444"/></svg>
</body></html>
